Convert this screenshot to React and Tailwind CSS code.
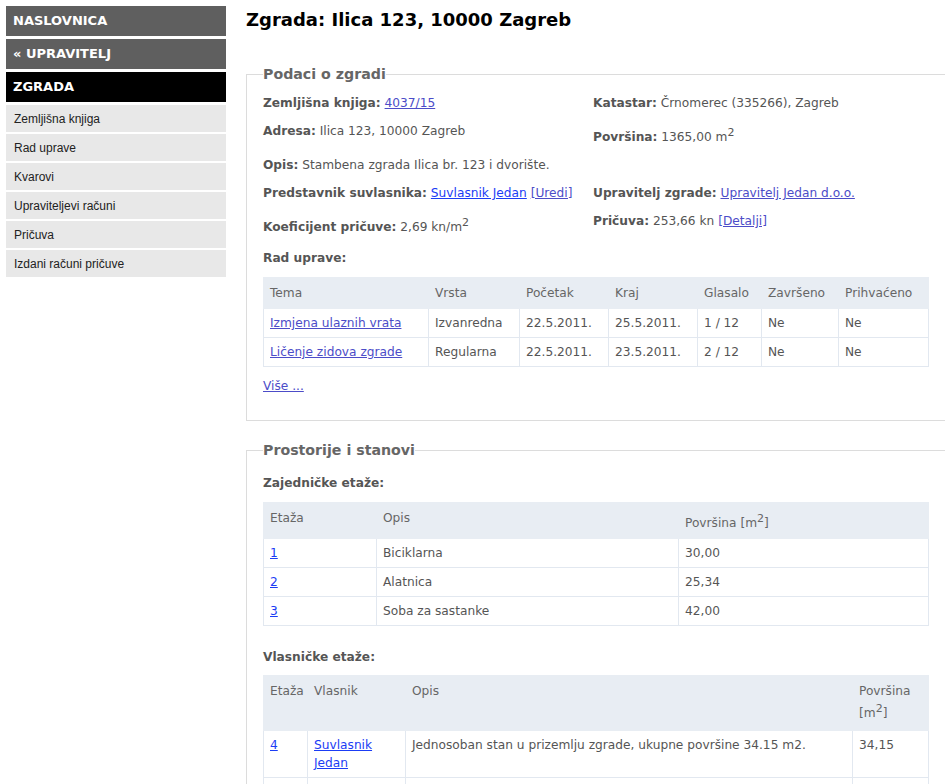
import React from "react";

const body = { fontFamily: '"DejaVu Sans", Verdana, sans-serif' };
const arial = { fontFamily: '"Liberation Sans", Arial, sans-serif' };

const linkSoft = "text-[#4c4cc8] underline";
const linkBright = "text-[#1b3cf5] underline";

function Sq() {
  return <sup className="text-[11px]">2</sup>;
}

const Sidebar = () => {
  const items = [
    "Zemljišna knjiga",
    "Rad uprave",
    "Kvarovi",
    "Upraviteljevi računi",
    "Pričuva",
    "Izdani računi pričuve",
  ];
  return (
    <div className="w-[220px] shrink-0">
      <div
        className="h-[30px] flex items-center pl-[7px] bg-[#5f5f5f] text-white font-bold text-[13px] mb-[3px]"
        style={body}
      >
        NASLOVNICA
      </div>
      <div
        className="h-[30px] flex items-center pl-[7px] bg-[#5f5f5f] text-white font-bold text-[13px] mb-[3px]"
        style={body}
      >
        « UPRAVITELJ
      </div>
      <div
        className="h-[30px] flex items-center pl-[7px] bg-black text-white font-bold text-[13px] mb-[3px]"
        style={body}
      >
        ZGRADA
      </div>
      {items.map((it) => (
        <div
          key={it}
          className="h-[27px] flex items-center pl-[8px] bg-[#e8e8e8] text-[#222] text-[12px] mb-[2px]"
          style={arial}
        >
          {it}
        </div>
      ))}
    </div>
  );
};

// table helpers
const th =
  "text-left font-normal text-[#666] align-top px-[6px] pt-[6px] pb-[6px] border border-[#e8edf3]";
const td = "align-top px-[6px] py-[5px] border border-[#e2e8f0]";

const Field = ({ label, children, className = "" }) => (
  <div className={"leading-[18px] whitespace-nowrap " + className}>
    <span className="font-bold">{label}</span> {children}
  </div>
);

export default function App() {
  const sjednice = [
    ["Izmjena ulaznih vrata", "Izvanredna", "22.5.2011.", "25.5.2011.", "1 / 12", "Ne", "Ne"],
    ["Ličenje zidova zgrade", "Regularna", "22.5.2011.", "23.5.2011.", "2 / 12", "Ne", "Ne"],
  ];
  const zajednicke = [
    ["1", "Biciklarna", "30,00"],
    ["2", "Alatnica", "25,34"],
    ["3", "Soba za sastanke", "42,00"],
  ];

  return (
    <div className="w-full h-[784px] overflow-hidden bg-white">
      <div className="flex p-[6px] gap-[20px]">
        <Sidebar />
        <div className="w-[700px] shrink-0 text-[12.2px] text-[#555]" style={body}>
          <h1 className="text-[18px] font-bold text-black leading-[24px] mt-[2px] mb-[33px]">
            Zgrada: Ilica 123, 10000 Zagreb
          </h1>

          <fieldset className="border border-[#dcdcdc] px-[16px] pb-[25px]">
            <legend className="text-[14.2px] font-bold text-[#666] leading-[18px] p-0">
              Podaci o zgradi
            </legend>
            <div className="grid grid-cols-[330px_1fr] items-start gap-y-[10px] mt-[11px]">
              <Field label="Zemljišna knjiga:">
                <a className={linkSoft}>4037/15</a>
              </Field>
              <Field label="Katastar:">Črnomerec (335266), Zagreb</Field>
              <Field label="Adresa:">Ilica 123, 10000 Zagreb</Field>
              <Field label="Površina:" className="pt-[6px]">
                1365,00 m<Sq />
              </Field>
              <Field label="Opis:" className="col-span-2">
                Stambena zgrada Ilica br. 123 i dvorište.
              </Field>
              <Field label="Predstavnik suvlasnika:">
                <a className={linkBright}>Suvlasnik Jedan</a>{" "}
                <a className={linkSoft}>[Uredi]</a>
              </Field>
              <Field label="Upravitelj zgrade:">
                <a className={linkSoft}>Upravitelj Jedan d.o.o.</a>
              </Field>
              <Field label="Koeficijent pričuve:" className="pt-[6px]">
                2,69 kn/m<Sq />
              </Field>
              <Field label="Pričuva:">
                253,66 kn <a className={linkSoft}>[Detalji]</a>
              </Field>
            </div>
            <div className="font-bold leading-[18px] mt-[13px] mb-[10px]">Rad uprave:</div>
            <table className="w-[665px] table-fixed border-collapse leading-[18px]">
              <colgroup>
                <col className="w-[165px]" />
                <col className="w-[91px]" />
                <col className="w-[89px]" />
                <col className="w-[89px]" />
                <col className="w-[64px]" />
                <col className="w-[77px]" />
                <col className="w-[90px]" />
              </colgroup>
              <thead>
                <tr className="bg-[#e8edf3]">
                  {["Tema", "Vrsta", "Početak", "Kraj", "Glasalo", "Završeno", "Prihvaćeno"].map(
                    (h) => (
                      <th key={h} className={th}>
                        {h}
                      </th>
                    )
                  )}
                </tr>
              </thead>
              <tbody>
                {sjednice.map((r) => (
                  <tr key={r[0]}>
                    {r.map((c, i) => (
                      <td key={i} className={td + " whitespace-nowrap"}>
                        {i === 0 ? <a className={linkSoft}>{c}</a> : c}
                      </td>
                    ))}
                  </tr>
                ))}
              </tbody>
            </table>
            <div className="leading-[18px] mt-[10px]">
              <a className={linkSoft}>Više ...</a>
            </div>
          </fieldset>

          <fieldset className="border border-[#dcdcdc] px-[16px] pb-[20px] mt-[20px]">
            <legend className="text-[14.2px] font-bold text-[#666] leading-[18px] p-0">
              Prostorije i stanovi
            </legend>
            <div className="font-bold leading-[18px] mt-[15px] mb-[10px]">Zajedničke etaže:</div>
            <table className="w-[665px] table-fixed border-collapse leading-[18px]">
              <colgroup>
                <col className="w-[113px]" />
                <col className="w-[302px]" />
                <col className="w-[250px]" />
              </colgroup>
              <thead>
                <tr className="bg-[#e8edf3]">
                  <th className={th}>Etaža</th>
                  <th className={th}>Opis</th>
                  <th className={th + " !pt-[11px]"}>
                    Površina [m<Sq />]
                  </th>
                </tr>
              </thead>
              <tbody>
                {zajednicke.map((r) => (
                  <tr key={r[0]}>
                    <td className={td}>
                      <a className={linkBright}>{r[0]}</a>
                    </td>
                    <td className={td}>{r[1]}</td>
                    <td className={td}>{r[2]}</td>
                  </tr>
                ))}
              </tbody>
            </table>

            <div className="font-bold leading-[18px] mt-[22px] mb-[9px]">Vlasničke etaže:</div>
            <table className="w-[665px] table-fixed border-collapse leading-[18px]">
              <colgroup>
                <col className="w-[44px]" />
                <col className="w-[98px]" />
                <col className="w-[447px]" />
                <col className="w-[76px]" />
              </colgroup>
              <thead>
                <tr className="bg-[#e8edf3]">
                  <th className={th}>Etaža</th>
                  <th className={th}>Vlasnik</th>
                  <th className={th}>Opis</th>
                  <th className={th + " !pb-[8px]"}>
                    <div>Površina</div>
                    <div className="pt-[4px]">
                      [m<Sq />]
                    </div>
                  </th>
                </tr>
              </thead>
              <tbody>
                <tr>
                  <td className={td}>
                    <a className={linkBright}>4</a>
                  </td>
                  <td className={td}>
                    <a className={linkBright}>Suvlasnik Jedan</a>
                  </td>
                  <td className={td}>
                    Jednosoban stan u prizemlju zgrade, ukupne površine 34.15 m2.
                  </td>
                  <td className={td}>34,15</td>
                </tr>
                <tr>
                  <td className={td}>
                    <a className={linkBright}>5</a>
                  </td>
                  <td className={td}>
                    <a className={linkBright}>Suvlasnik Dva</a>
                  </td>
                  <td className={td}>Dvosoban stan na prvom katu zgrade.</td>
                  <td className={td}>52,40</td>
                </tr>
              </tbody>
            </table>
          </fieldset>
        </div>
      </div>
    </div>
  );
}
